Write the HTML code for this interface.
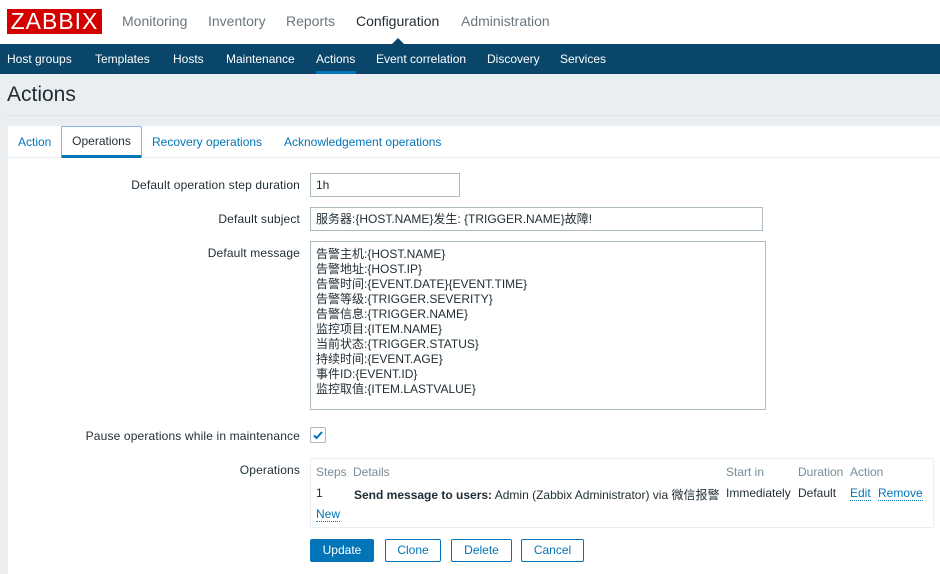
<!DOCTYPE html>
<html><head><meta charset="utf-8"><style>
*{margin:0;padding:0;box-sizing:border-box}
body{width:940px;height:574px;overflow:hidden;background:#ebeef0;font-family:Arial,"Liberation Sans","Noto Sans CJK SC",sans-serif;font-size:12px;color:#1f2c33;position:relative}
.a{position:absolute}
.hdr{left:0;top:0;width:940px;height:44px;background:#fff}
.logo{left:7px;top:9px;width:95px;height:25px;background:#d40000;color:#fff;font-size:23px;line-height:25px;text-align:center;letter-spacing:1px}
.top{top:13px;font-size:14px;color:#687780}
.nav{left:0;top:44px;width:940px;height:30px;background:#0a466a}
.nav span{position:absolute;top:8px;color:#fff;font-size:12px}
.title{left:7px;top:83px;font-size:21px;color:#1f2c33}
.sep{left:7px;top:115px;width:933px;height:1px;background:#dfe4e7}
.panel{left:8px;top:126px;width:932px;height:448px;background:#fff}
.tabline{left:8px;top:157px;width:932px;height:1px;background:#ebeef0}
.tab{top:135px;color:#0275b8}
.lbl{right:640px;color:#1f2c33;text-align:right;white-space:nowrap;letter-spacing:0.15px}
.inp{border:1px solid #acbbc2;background:#fff;padding:0 5px}
.btn{top:539px;height:23px;border:1px solid #0275b8;color:#0275b8;background:#fff;text-align:center;line-height:21px;border-radius:2px}
.lnk{color:#0275b8;border-bottom:1px dotted #0275b8}
</style></head><body>
<div class="a hdr"></div>
<div class="a logo">ZABBIX</div>
<div class="a top" style="left:122px">Monitoring</div>
<div class="a top" style="left:208px">Inventory</div>
<div class="a top" style="left:286px">Reports</div>
<div class="a top" style="left:356px;color:#1f2c33">Configuration</div>
<div class="a top" style="left:461px">Administration</div>
<div class="a nav">
<span style="left:7px">Host groups</span><span style="left:95px">Templates</span><span style="left:173px">Hosts</span><span style="left:226px">Maintenance</span><span style="left:316px">Actions</span><span style="left:376px">Event correlation</span><span style="left:487px">Discovery</span><span style="left:560px">Services</span>
</div>
<div class="a" style="left:316px;top:71px;width:40px;height:3px;background:#0275b8"></div>
<div class="a" style="left:392px;top:38px;width:0;height:0;border-left:6px solid transparent;border-right:6px solid transparent;border-bottom:6px solid #0a466a"></div>
<div class="a title">Actions</div>
<div class="a sep"></div>
<div class="a panel"></div>
<div class="a tabline"></div>
<div class="a tab" style="left:18px">Action</div>
<div class="a" style="left:61px;top:126px;width:81px;height:32px;border:1px solid #82b5e8;border-bottom:3px solid #0275b8;border-radius:2px;text-align:center;line-height:29px;color:#1f2c33">Operations</div>
<div class="a tab" style="left:152px">Recovery operations</div>
<div class="a tab" style="left:284px">Acknowledgement operations</div>

<div class="a lbl" style="top:178px">Default operation step duration</div>
<div class="a inp" style="left:310px;top:173px;width:150px;height:24px;line-height:22px">1h</div>
<div class="a lbl" style="top:212px">Default subject</div>
<div class="a inp" style="left:310px;top:207px;width:453px;height:24px;line-height:22px">服务器:{HOST.NAME}发生: {TRIGGER.NAME}故障!</div>
<div class="a lbl" style="top:246px">Default message</div>
<div class="a inp" style="left:310px;top:241px;width:456px;height:169px;padding-top:5px;line-height:15px">告警主机:{HOST.NAME}<br>告警地址:{HOST.IP}<br>告警时间:{EVENT.DATE}{EVENT.TIME}<br>告警等级:{TRIGGER.SEVERITY}<br>告警信息:{TRIGGER.NAME}<br>监控项目:{ITEM.NAME}<br>当前状态:{TRIGGER.STATUS}<br>持续时间:{EVENT.AGE}<br>事件ID:{EVENT.ID}<br>监控取值:{ITEM.LASTVALUE}</div>
<div class="a lbl" style="top:429px">Pause operations while in maintenance</div>
<div class="a" style="left:310px;top:427px;width:16px;height:16px;border:1px solid #acbbc2;border-radius:2px"><svg width="14" height="14" viewBox="0 0 14 14"><path d="M3 7.5l2.5 2.5L11 4" stroke="#0275b8" stroke-width="2" fill="none"/></svg></div>
<div class="a lbl" style="top:463px">Operations</div>
<div class="a" style="left:310px;top:458px;width:624px;height:70px;border:1px solid #ebeef0"></div>
<div class="a" style="left:316px;top:465px;color:#768d99">Steps</div>
<div class="a" style="left:353px;top:465px;color:#768d99">Details</div>
<div class="a" style="left:726px;top:465px;color:#768d99">Start in</div>
<div class="a" style="left:798px;top:465px;color:#768d99">Duration</div>
<div class="a" style="left:850px;top:465px;color:#768d99">Action</div>
<div class="a" style="left:316px;top:486px">1</div>
<div class="a" style="left:354px;top:486px;white-space:nowrap"><b>Send message to users:</b> Admin (Zabbix Administrator) via 微信报警</div>
<div class="a" style="left:726px;top:486px">Immediately</div>
<div class="a" style="left:798px;top:486px">Default</div>
<div class="a lnk" style="left:850px;top:486px">Edit</div>
<div class="a lnk" style="left:878px;top:486px">Remove</div>
<div class="a lnk" style="left:316px;top:507px">New</div>
<div class="a btn" style="left:310px;width:64px;background:#0275b8;color:#fff">Update</div>
<div class="a btn" style="left:385px;width:56px">Clone</div>
<div class="a btn" style="left:451px;width:61px">Delete</div>
<div class="a btn" style="left:521px;width:63px">Cancel</div>
</body></html>
